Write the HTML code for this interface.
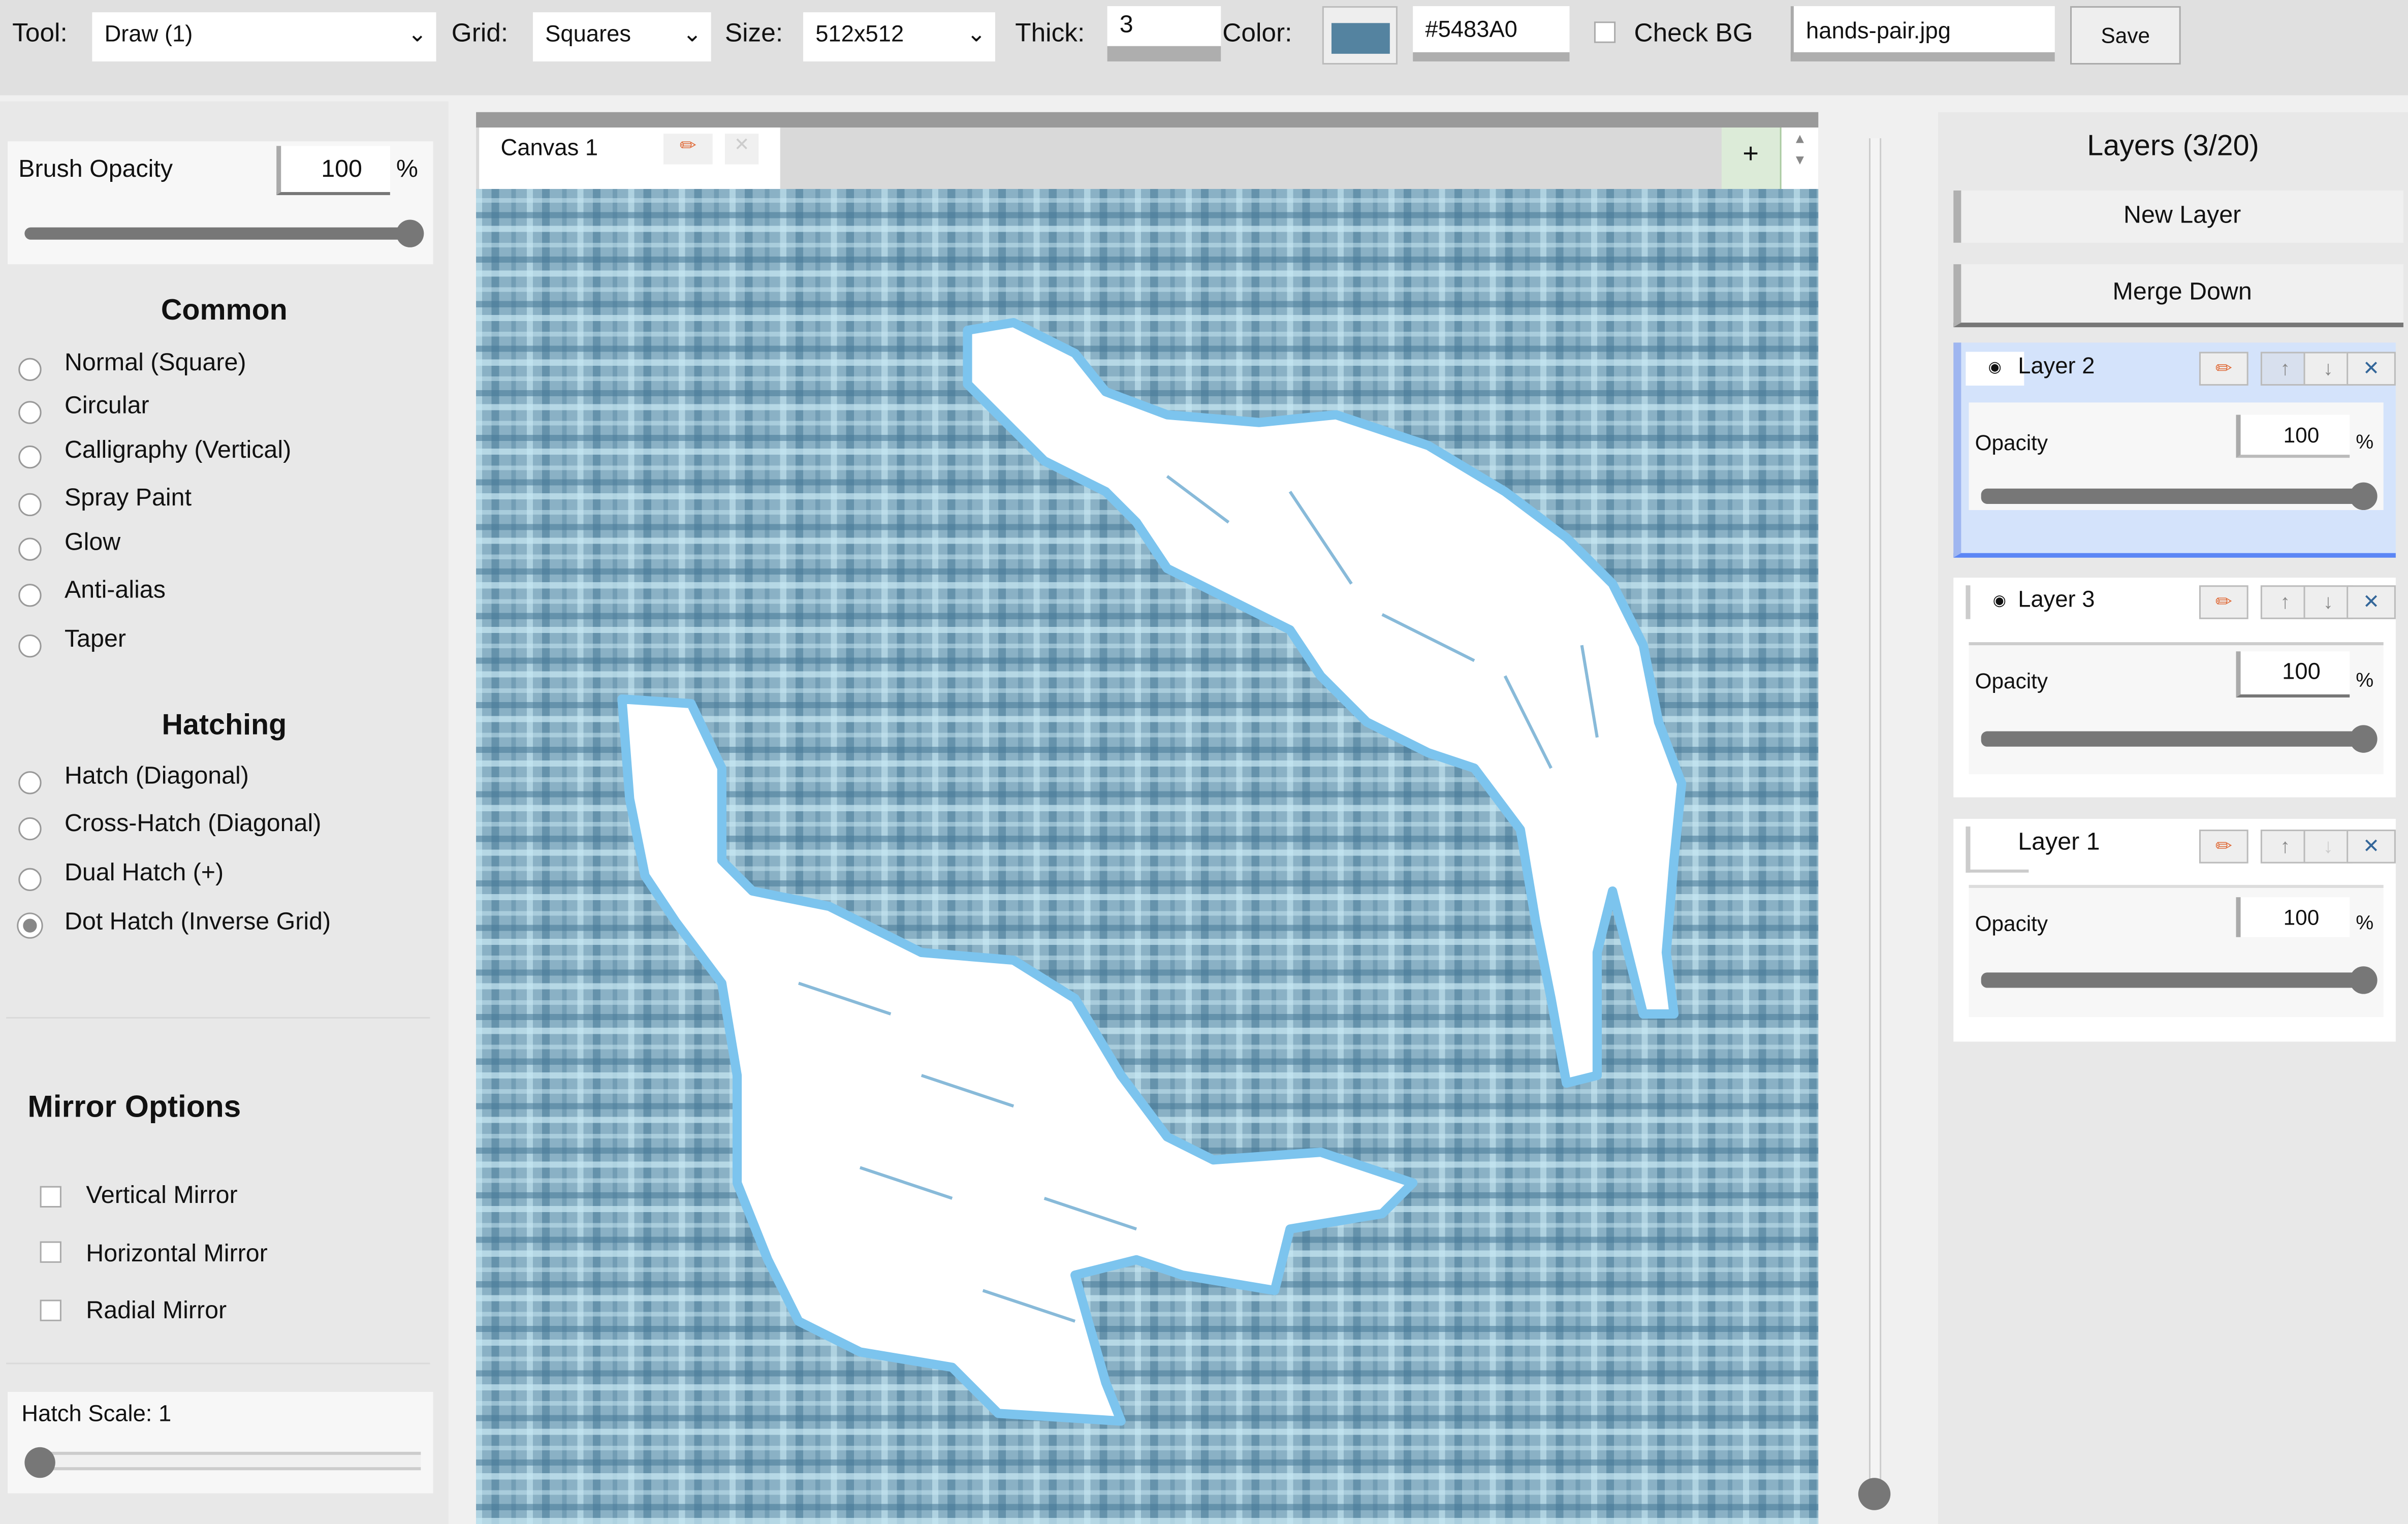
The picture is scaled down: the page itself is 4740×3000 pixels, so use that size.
<!DOCTYPE html>
<html><head><meta charset="utf-8">
<style>
html,body{margin:0;padding:0;width:4740px;height:3000px;overflow:hidden;background:#f0f0f0}
#w{position:absolute;left:0;top:0;width:1568px;height:992px;transform:scale(3.0230,3.0242);transform-origin:0 0;font-family:"Liberation Sans",sans-serif;color:#111;background:#f0f0f0}
.a{position:absolute}
.tb{left:0;top:0;width:1568px;height:62px;background:#e0e0e0}
.lbl{font-size:17px;top:12px}
.in{background:#fff;font-size:16px;padding-left:8px;box-sizing:border-box}
.radio{width:15px;height:15px;border-radius:50%;border:1px solid #999;background:#fff;box-sizing:border-box}
.rt{font-size:16px}
.chk{width:14px;height:14px;border:1px solid #aaa;background:#fff;box-sizing:border-box}
.slider{height:8px;background:#777;border-radius:4px}
.thumb{width:18px;height:18px;border-radius:50%;background:#777}
.ib{width:32px;height:22px;background:#eee;border:1px solid #bbb;box-sizing:border-box;font-size:13px;text-align:center;line-height:20px;color:#888}
</style></head><body><div id="w">
<div class="a tb"></div>
<div class="a lbl" style="left:8px">Tool:</div>
<div class="a in" style="left:60px;top:8px;width:224px;height:32px;line-height:30px;font-size:15px">Draw (1)<span style="position:absolute;right:6px">⌄</span></div>
<div class="a lbl" style="left:294px">Grid:</div>
<div class="a in" style="left:347px;top:8px;width:116px;height:32px;line-height:30px;font-size:15px">Squares<span style="position:absolute;right:6px">⌄</span></div>
<div class="a lbl" style="left:472px">Size:</div>
<div class="a in" style="left:523px;top:8px;width:125px;height:32px;line-height:30px;font-size:15px">512x512<span style="position:absolute;right:6px">⌄</span></div>
<div class="a lbl" style="left:661px">Thick:</div>
<div class="a in" style="left:721px;top:4px;width:66px;height:26px;line-height:26px;border-bottom:10px solid #aeaeae;box-sizing:content-box">3</div>
<div class="a lbl" style="left:796px">Color:</div>
<div class="a" style="left:861px;top:4px;width:49px;height:38px;background:#eee;border:1px solid #bbb;box-sizing:border-box"><div class="a" style="left:5px;top:10px;width:38px;height:20px;background:#5483a0"></div></div>
<div class="a in" style="left:920px;top:4px;width:102px;height:36px;line-height:32px;font-size:15px;border-bottom:6px solid #aeaeae">#5483A0</div>
<div class="a chk" style="left:1038px;top:14px"></div>
<div class="a lbl" style="left:1064px">Check BG</div>
<div class="a in" style="left:1166px;top:4px;width:172px;height:36px;line-height:34px;font-size:15px;border-left:2px solid #aaa;border-bottom:6px solid #aeaeae">hands-pair.jpg</div>
<div class="a" style="left:1348px;top:4px;width:70px;height:36px;background:#eee;border:1px solid #aaa;font-size:14px;text-align:center;line-height:36px">Save</div>

<!-- left panel -->
<div class="a" style="left:0;top:66px;width:292px;height:926px;background:#e8e8e8"></div>
<div class="a" style="left:5px;top:92px;width:277px;height:80px;background:#f7f7f7"></div>
<div class="a rt" style="left:12px;top:102px">Brush Opacity</div>
<div class="a in" style="left:180px;top:95px;width:74px;height:32px;line-height:32px;border-left:3px solid #aaa;border-bottom:2px solid #777;text-align:center">100</div>
<div class="a rt" style="left:258px;top:102px">%</div>
<div class="a slider" style="left:16px;top:148px;width:258px"></div>
<div class="a thumb" style="left:258px;top:143px"></div>
<div class="a" style="left:0;top:192px;width:292px;text-align:center;font-size:19px;font-weight:bold">Common</div>
<div class="a radio" style="left:12px;top:233px"></div><div class="a rt" style="left:42px;top:228px">Normal (Square)</div>
<div class="a radio" style="left:12px;top:261px"></div><div class="a rt" style="left:42px;top:256px">Circular</div>
<div class="a radio" style="left:12px;top:290px"></div><div class="a rt" style="left:42px;top:285px">Calligraphy (Vertical)</div>
<div class="a radio" style="left:12px;top:321px"></div><div class="a rt" style="left:42px;top:316px">Spray Paint</div>
<div class="a radio" style="left:12px;top:350px"></div><div class="a rt" style="left:42px;top:345px">Glow</div>
<div class="a radio" style="left:12px;top:380px"></div><div class="a rt" style="left:42px;top:376px">Anti-alias</div>
<div class="a radio" style="left:12px;top:413px"></div><div class="a rt" style="left:42px;top:408px">Taper</div>
<div class="a" style="left:0;top:462px;width:292px;text-align:center;font-size:19px;font-weight:bold">Hatching</div>
<div class="a radio" style="left:12px;top:502px"></div><div class="a rt" style="left:42px;top:497px">Hatch (Diagonal)</div>
<div class="a radio" style="left:12px;top:532px"></div><div class="a rt" style="left:42px;top:528px">Cross-Hatch (Diagonal)</div>
<div class="a radio" style="left:12px;top:565px"></div><div class="a rt" style="left:42px;top:560px">Dual Hatch (+)</div>
<div class="a radio" style="left:12px;top:595px;background:#888;border:3px solid #fff;box-shadow:0 0 0 1px #999"></div><div class="a rt" style="left:42px;top:592px">Dot Hatch (Inverse Grid)</div>
<div class="a" style="left:4px;top:662px;width:276px;height:1px;background:#dadada"></div>
<div class="a" style="left:18px;top:710px;font-size:20px;font-weight:bold">Mirror Options</div>
<div class="a chk" style="left:26px;top:772px"></div><div class="a rt" style="left:56px;top:770px">Vertical Mirror</div>
<div class="a chk" style="left:26px;top:808px"></div><div class="a rt" style="left:56px;top:808px">Horizontal Mirror</div>
<div class="a chk" style="left:26px;top:846px"></div><div class="a rt" style="left:56px;top:845px">Radial Mirror</div>
<div class="a" style="left:4px;top:887px;width:276px;height:1px;background:#dadada"></div>
<div class="a" style="left:5px;top:906px;width:277px;height:66px;background:#f7f7f7"></div>
<div class="a" style="left:14px;top:912px;font-size:15px">Hatch Scale: 1</div>
<div class="a" style="left:28px;top:945px;width:246px;height:12px;background:#f0f0f0;border-top:2px solid #ccc;border-bottom:2px solid #ccc;box-sizing:border-box"></div>
<div class="a thumb" style="left:16px;top:942px;width:20px;height:20px"></div>

<!-- canvas area -->
<div class="a" style="left:310px;top:73px;width:874px;height:50px;background:#d9d9d9;border-top:10px solid #9a9a9a;box-sizing:border-box"></div>
<div class="a" style="left:312px;top:83px;width:196px;height:40px;background:#fff"></div>
<div class="a" style="left:326px;top:88px;font-size:15px">Canvas 1</div>
<div class="a" style="left:432px;top:87px;width:32px;height:20px;background:#f0f0f0;color:#e07040;font-size:13px;text-align:center">✏</div>
<div class="a" style="left:472px;top:87px;width:22px;height:20px;background:#f0f0f0;color:#ccc;font-size:12px;text-align:center">✕</div>
<div class="a" style="left:1121px;top:83px;width:38px;height:40px;background:#dcebd8;border-right:1px solid #aacaa0;text-align:center;font-size:18px;line-height:34px">+</div>
<div class="a" style="left:1160px;top:83px;width:24px;height:40px;background:#fff;color:#888;font-size:9px;text-align:center;line-height:14px">▲<br>▼</div>
<div class="a" style="left:310px;top:123px;width:874px;height:869px;background-color:#8ab1c5;
background-image:repeating-linear-gradient(0deg,rgba(200,232,243,.7) 0 4px,transparent 4px 9px,rgba(70,120,150,.55) 9px 13px,transparent 13px 19px,rgba(200,232,243,.5) 19px 22px,transparent 22px 29px),repeating-linear-gradient(90deg,rgba(200,232,243,.6) 0 4px,transparent 4px 10px,rgba(70,120,150,.55) 10px 15px,transparent 15px 23px,rgba(70,120,150,.35) 23px 26px,transparent 26px 33px);"></div>
<svg class="a" style="left:310px;top:123px" width="874" height="869" viewBox="310 123 874 869">
<g fill="#fff" stroke="#7cc4ee" stroke-width="6" stroke-linejoin="round">
<path d="M630 215 L660 210 L700 230 L720 255 L760 270 L820 275 L870 270 L930 290 L980 320 L1020 350 L1050 380 L1070 420 L1080 470 L1095 510 L1090 560 L1085 620 L1090 660 L1070 660 L1060 620 L1050 580 L1040 620 L1040 700 L1020 705 L1010 650 L1000 600 L990 540 L960 500 L930 490 L890 470 L860 440 L840 410 L800 390 L760 370 L740 340 L720 320 L680 300 L660 280 L630 250 Z"/>
<path d="M405 455 L450 458 L470 500 L470 560 L490 580 L540 590 L600 620 L660 625 L700 650 L730 700 L760 740 L790 755 L860 750 L920 770 L900 790 L840 800 L830 840 L770 830 L740 820 L700 830 L720 900 L730 925 L650 920 L620 890 L560 880 L520 860 L500 820 L480 770 L480 700 L470 640 L440 600 L420 570 L410 520 Z"/>
</g>
<g stroke="#6aa9d0" stroke-width="2" fill="none" opacity=".8">
<path d="M760 310 L800 340 M840 320 L880 380 M900 400 L960 430 M980 440 L1010 500 M1030 420 L1040 480"/>
<path d="M520 640 L580 660 M600 700 L660 720 M560 760 L620 780 M680 780 L740 800 M640 840 L700 860"/>
</g>
</svg>

<!-- vertical slider -->
<div class="a" style="left:1217px;top:90px;width:6px;height:880px;background:#f4f4f4;border-left:1px solid #ccc;border-right:1px solid #ccc"></div>
<div class="a thumb" style="left:1210px;top:962px;width:21px;height:21px"></div>

<!-- right panel -->
<div class="a" style="left:1262px;top:73px;width:306px;height:919px;background:#e8e8e8"></div>
<div class="a" style="left:1262px;top:85px;width:306px;text-align:center;font-size:19px">Layers (3/20)</div>
<div class="a" style="left:1272px;top:124px;width:288px;height:34px;background:#f0f0f0;border-left:5px solid #b0b0b0;font-size:16px;text-align:center;line-height:34px">New Layer</div>
<div class="a" style="left:1272px;top:172px;width:288px;height:38px;background:#f0f0f0;border-left:5px solid #b0b0b0;border-bottom:3px solid #777;font-size:16px;text-align:center;line-height:38px">Merge Down</div>

<div class="a" style="left:1272px;top:223px;width:288px;height:140px;background:#d4e3fb;border-left:5px solid #9fb6f0;border-bottom:3px solid #5b86f5;box-sizing:border-box"></div>
<div class="a" style="left:1280px;top:229px;width:38px;height:22px;background:#fff;font-size:10px;text-align:center;line-height:22px">◉</div>
<div class="a" style="left:1314px;top:230px;font-size:15px">Layer 2</div>
<div class="a ib" style="left:1432px;top:229px;color:#e07040">✏</div>
<div class="a ib" style="left:1472px;top:229px;background:#d8e0ee">↑</div>
<div class="a ib" style="left:1500px;top:229px">↓</div>
<div class="a ib" style="left:1528px;top:229px;color:#369">✕</div>
<div class="a" style="left:1282px;top:262px;width:270px;height:70px;background:#f7f7f7"></div>
<div class="a" style="left:1286px;top:280px;font-size:14px">Opacity</div>
<div class="a in" style="left:1456px;top:270px;width:74px;height:28px;line-height:26px;border-left:3px solid #aaa;border-bottom:2px solid #bbb;text-align:center;font-size:14px">100</div>
<div class="a" style="left:1534px;top:280px;font-size:13px">%</div>
<div class="a slider" style="left:1290px;top:318px;width:250px;height:10px"></div>
<div class="a thumb" style="left:1530px;top:314px"></div>

<div class="a" style="left:1272px;top:376px;width:288px;height:143px;background:#fff"></div>
<div class="a" style="left:1280px;top:381px;width:38px;height:22px;background:#fff;font-size:10px;text-align:center;line-height:22px;border-left:3px solid #ccc">◉</div>
<div class="a" style="left:1314px;top:382px;font-size:15px">Layer 3</div>
<div class="a ib" style="left:1432px;top:381px;color:#e07040">✏</div>
<div class="a ib" style="left:1472px;top:381px">↑</div>
<div class="a ib" style="left:1500px;top:381px">↓</div>
<div class="a ib" style="left:1528px;top:381px;color:#369">✕</div>
<div class="a" style="left:1282px;top:418px;width:270px;height:84px;background:#f7f7f7;border-top:2px solid #ccc"></div>
<div class="a" style="left:1286px;top:435px;font-size:14px">Opacity</div>
<div class="a in" style="left:1456px;top:424px;width:74px;height:30px;line-height:28px;border-left:3px solid #aaa;border-bottom:2px solid #777;text-align:center;font-size:15px">100</div>
<div class="a" style="left:1534px;top:435px;font-size:13px">%</div>
<div class="a slider" style="left:1290px;top:476px;width:250px;height:10px"></div>
<div class="a thumb" style="left:1530px;top:472px"></div>

<div class="a" style="left:1272px;top:533px;width:288px;height:145px;background:#fff"></div>
<div class="a" style="left:1280px;top:538px;width:38px;height:28px;background:#fff;border-left:3px solid #ccc;border-bottom:2px solid #ccc"></div>
<div class="a" style="left:1314px;top:540px;font-size:16px">Layer 1</div>
<div class="a ib" style="left:1432px;top:540px;color:#e07040">✏</div>
<div class="a ib" style="left:1472px;top:540px">↑</div>
<div class="a ib" style="left:1500px;top:540px;color:#ccc">↓</div>
<div class="a ib" style="left:1528px;top:540px;color:#369">✕</div>
<div class="a" style="left:1282px;top:576px;width:270px;height:84px;background:#f7f7f7;border-top:2px solid #ddd"></div>
<div class="a" style="left:1286px;top:593px;font-size:14px">Opacity</div>
<div class="a in" style="left:1456px;top:584px;width:74px;height:26px;line-height:26px;border-left:3px solid #aaa;text-align:center;font-size:14px">100</div>
<div class="a" style="left:1534px;top:593px;font-size:13px">%</div>
<div class="a slider" style="left:1290px;top:633px;width:250px;height:10px"></div>
<div class="a thumb" style="left:1530px;top:629px"></div>
</div></body></html>
